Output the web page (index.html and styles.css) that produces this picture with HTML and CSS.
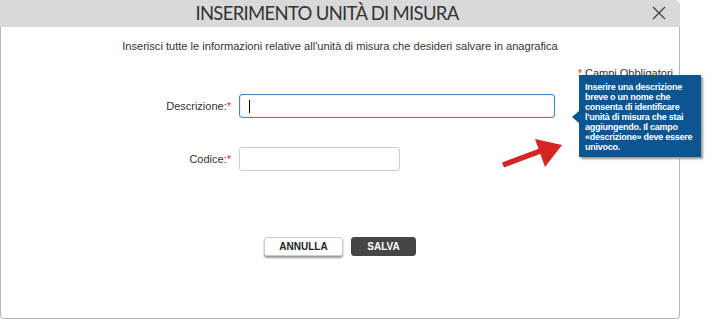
FILE: index.html
```html
<!DOCTYPE html>
<html lang="it">
<head>
<meta charset="utf-8">
<title>Inserimento unità di misura</title>
<link rel="stylesheet" href="styles.css">
</head>
<body>
<div class="dialog">
  <div class="dlg-head">
    <h1 class="dlg-title">INSERIMENTO UNITÀ DI MISURA</h1>
    <span class="dlg-close">
      <svg width="14" height="14" viewBox="0 0 14 14"><path d="M1 1 L13 13 M13 1 L1 13" stroke="#444" stroke-width="1.4" fill="none"/></svg>
    </span>
  </div>
  <div class="dlg-body">
    <p class="intro">Inserisci tutte le informazioni relative all'unità di misura che desideri salvare in anagrafica</p>
    <p class="required"><span class="star">*</span> Campi Obbligatori</p>
    <div class="form">
      <label class="lbl">Descrizione:<span class="star">*</span></label>
      <div class="field focus wide"><span class="caret"></span></div>
      <label class="lbl">Codice:<span class="star">*</span></label>
      <div class="field short"></div>
    </div>
    <div class="actions">
      <button class="btn btn-light">ANNULLA</button>
      <button class="btn btn-dark">SALVA</button>
    </div>
  </div>
  <div class="tip">Inserire una descrizione breve o un nome che consenta di identificare l'unità di misura che stai aggiungendo. Il campo «descrizione» deve essere univoco.</div>
  <svg class="arrow" width="70" height="40" viewBox="0 0 70 40">
    <path d="M4 32 L44 17" stroke="#d42424" stroke-width="5.5" fill="none"/>
    <path d="M36 6 L63 12 L46 34 Z" fill="#d42424"/>
  </svg>
</div>
</body>
</html>
```
FILE: styles.css
```css
html, body { margin: 0; padding: 0; background: #fff; }
body { font-family: "Liberation Sans", Arial, sans-serif; }
.dialog { position: relative; width: 680px; height: 319px; display: flex; flex-direction: column; }
.dlg-head { height: 27px; background: #d9d9d9; border-radius: 0 5px 0 0; display: flex; align-items: center; justify-content: center; position: relative; padding-right: 26px; }
.dlg-title { margin: 0; font-family: Lato, sans-serif; font-weight: 400; font-size: 18.5px; color: #333; letter-spacing: -0.7px; line-height: 27px; }
.dlg-close { position: absolute; right: 14px; top: 6px; width: 14px; height: 14px; display: block; }
.dlg-close svg { display: block; }
.dlg-body { flex: 1; border: 1px solid #b4b4b4; border-top: none; border-radius: 0 0 4px 4px; display: flex; flex-direction: column; }
.intro { margin: 13px 0 0; text-align: center; font-size: 11.1px; color: #333; line-height: 13px; }
.required { margin: 14px 6px 0 0; text-align: right; font-size: 11px; color: #333; line-height: 13px; }
.star { color: #d33; }
.form { display: grid; grid-template-columns: 230px auto; column-gap: 8px; row-gap: 29px; align-items: center; margin-top: 14px; }
.lbl { text-align: right; font-size: 11px; color: #333; line-height: 13px; }
.field { height: 22px; border: 1px solid #ccc; border-radius: 3px; box-sizing: content-box; position: relative; }
.field.wide { width: 314px; }
.field.short { width: 159px; }
.field.focus { border-color: #4a86b8; box-shadow: inset 0 0 1px #4a86b8; }
.caret { position: absolute; left: 9px; top: 5px; width: 1px; height: 13px; background: #000; }
.actions { display: flex; justify-content: center; gap: 8px; margin-top: 66px; }
.btn { height: 19px; padding: 0; border-radius: 3px; font-family: "Liberation Sans", Arial, sans-serif; font-size: 10px; font-weight: bold; line-height: 17px; cursor: pointer; }
.btn-light { width: 79px; background: #fff; color: #222; border: 1px solid #ccc; box-shadow: 0 2px 2px #999; }
.btn-dark { width: 65px; background: #454545; color: #fff; border: 1px solid #454545; }
.tip { position: absolute; left: 579px; top: 75px; width: 113px; height: 71px; padding: 7px 3px 4px 6px; background: #0c5591; color: #fff; font-family: "Liberation Sans", sans-serif; font-weight: bold; font-size: 9px; letter-spacing: -0.25px; line-height: 10px; box-shadow: 2px 2px 2px #999; }
.tip::before { content: ""; position: absolute; left: -7px; top: 36px; border-style: solid; border-width: 6px 7px 6px 0; border-color: transparent #0c5591 transparent transparent; }
.arrow { position: absolute; left: 499px; top: 133px; }
```
